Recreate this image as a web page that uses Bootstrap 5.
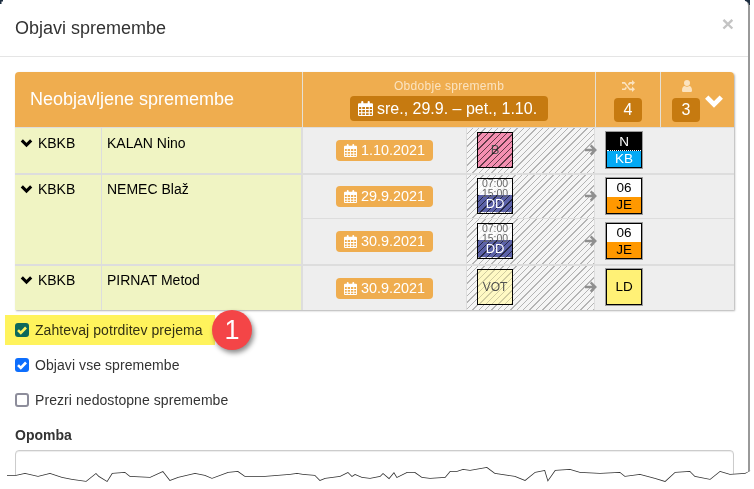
<!DOCTYPE html>
<html lang="sl">
<head>
<meta charset="UTF-8">
<title>Objavi spremembe</title>
<link rel="stylesheet" href="https://cdn.jsdelivr.net/npm/bootstrap@5.3.0/dist/css/bootstrap.min.css">
<style>
    html, body { height: 489px; overflow: hidden; background: #fff; }
    body { font-family: "Liberation Sans", Arial, sans-serif; font-size: 14px; color: #333; }
    .shot { width: 750px; height: 489px; position: relative; }
    .dlg { height: 489px; border-right: 2px solid #999; border-radius: 0 6px 0 0; }
    .dlg-head { height: 57px; padding: 0 15px; border-bottom: 1px solid #e5e5e5; }
    .dlg-title { font-size: 18px; line-height: 1; margin: 0; color: #333; }
    .dlg-x { font-size: 21px; font-weight: 700; line-height: 1; color: #c4c4c4; margin-top: -9px; margin-right: -1px; }
    .dlg-body { padding: 15px 15px 0; }

    .chg { width: 719px; table-layout: fixed; border-collapse: separate; border-spacing: 0; box-shadow: 1px 1px 2px rgba(0,0,0,.3); border-radius: 4px 4px 0 0; margin-bottom: 5px; }
    .chg th { height: 55px; background: #efad4f; color: #fff; font-weight: 400; text-align: center; vertical-align: top; border-left: 1px solid #e5e0d5; padding: 8px 0 0; position: relative; }
    .chg th:first-child { border-left: 0; border-radius: 4px 0 0 0; text-align: left; vertical-align: middle; font-size: 18px; padding: 0 0 0 15px; }
    .chg th:nth-child(2) { padding-top: 7px; }
    .chg th:last-child { border-radius: 0 4px 0 0; }
    .chg td { height: 46px; padding: 0; background: #eee; border-top: 1px solid #ddd; position: relative; vertical-align: middle; }
    .chg tr.grp td { border-top-width: 2px; }
    .chg tr.sub-a td { height: 45px; }
    .chg tbody tr:first-child td { border-top-width: 1px; }
    .chg td.who { background: #f0f4c3; color: #000; vertical-align: top; padding: 5px 5px 0; border-top: 2px solid #ddd; line-height: 21px; }
    .chg tr.grp td.who { padding-top: 4px; }
    .chg td.who + td.who { border-left: 1px solid #ddd; }
    .chg tbody tr:first-child td.who { border-top-width: 1px; }
    .chg tr.sub-a td.who { height: 91px; }
    .chg td.who-right { border-right: 1px solid #ddd; }
    .chg td.day { text-align: center; border-left: 1px solid #ddd; }
    .chg td.old { border-left: 1px solid #ddd; border-right: 1px solid #ddd; }

    .per-cap { font-size: 12px; line-height: 14px; color: #fbe3c0; letter-spacing: .3px; }
    .per { display: inline-flex; align-items: center; gap: 4px; height: 25px; padding: 0 11px 0 8px; margin-top: 3px; background: #c67a10; color: #fff; font-size: 16px; border-radius: 4px; }
    .cnt { display: block; width: 28px; height: 24px; margin: 6px auto 0; line-height: 24px; background: #c67a10; color: #fff; font-size: 16px; border-radius: 4px; }
    .cnt-left { margin-left: 11px; }
    .hd-ico { display: block; margin: 0 auto; fill: #fbe3c0; }
    .hd-ico-left { margin-left: 21px; }
    .hd-chev { position: absolute; right: 10px; top: 23px; }
    .chev { margin: 0 1px 2px 0; }

    .dt { display: inline-flex; align-items: center; gap: 4px; height: 21px; width: 97px; justify-content: center; vertical-align: middle; background: #efad4f; color: #fff; font-size: 14.4px; border-radius: 4px; }

    .hatch { position: absolute; inset: 0; background: #f5f5f5 repeating-linear-gradient(-45deg, #b4b4b4 0, #b4b4b4 1px, transparent 1px, transparent 4.5px); }
    .tile { position: absolute; left: 10px; top: 4px; width: 36px; height: 36px; border: 1px solid #000; overflow: hidden; text-align: center; color: #555; font-size: 13px; line-height: 34px; }
    .tile::after { content: ""; position: absolute; inset: 0; background: repeating-linear-gradient(-45deg, rgba(0,0,0,.6) 0, rgba(0,0,0,.6) 1px, transparent 1px, transparent 4.5px); }
    .grp .tile, .grp .nw { top: 3px; }
    .tile-pink { background: #f48fb1; }
    .tile-cream { background: #fff9c4; font-size: 12px; }
    .tile-cream::after { opacity: .3; }
    .tile-top { position: relative; z-index: 1; height: 17px; background: rgba(255,255,255,.88); font-size: 10.5px; line-height: 10px; color: #666; }
    .tile-top span { display: block; }
    .tile-top span:first-child { margin-top: -1px; }
    .tile-btm { height: 17px; background: #5c62a8; color: #fff; font-size: 13px; line-height: 17px; }
    .tile-btm span { position: relative; z-index: 1; }
    .go { position: absolute; right: -3px; top: 16px; fill: #8f8f8f; z-index: 1; }
    .grp .go { top: 15px; }

    .nw { position: absolute; left: 11px; top: 4px; width: 36px; height: 36px; border: 1px solid #000; box-shadow: 0 0 0 1px rgba(0,0,0,.35); overflow: hidden; text-align: center; color: #000; font-size: 13.5px; }
    .nw-top { height: 18px; line-height: 17px; background: #fff; border-bottom: 1px dotted #fff; }
    .nw-btm { height: 16px; line-height: 16px; }
    .nw-n { background: #000; color: #fff; }
    .nw-kb { background: #03a9f4; color: #fff; }
    .nw-je { background: #ff9800; }
    .nw-ld { background: #fff176; line-height: 34px; }

    .opt { display: flex; align-items: center; gap: 6px; height: 30px; padding-left: 10px; margin-bottom: 5px; margin-left: -10px; font-size: 14px; letter-spacing: .07px; line-height: 1; width: 210px; position: relative; white-space: nowrap; }
    .opt .form-check-input { margin: 0; width: 14px; height: 14px; flex: none; border: 2px solid #8d8d9b; border-radius: 3px; }
    .opt .form-check-input:checked { border: 0; background-size: 14px 14px; background-image: url("data:image/svg+xml,%3csvg xmlns='http://www.w3.org/2000/svg' viewBox='0 0 14 14'%3e%3cpath fill='none' stroke='%23fff' stroke-width='2.600' d='M3 7.200l2.800 2.800L11 4.500'/%3e%3c/svg%3e"); }
    .opt-mark::after { content: ""; position: absolute; inset: 0; background: #fff35c; mix-blend-mode: multiply; }
    .num { position: absolute; left: 212px; top: 310px; width: 40px; height: 40px; border-radius: 50%; background: #f44547; color: #fff; font-size: 27px; line-height: 40px; text-align: center; box-shadow: 2px 3px 5px rgba(0,0,0,.45); }
    .note-lbl { font-weight: 700; margin: 10px 0 5px; line-height: 20px; }
    .note { height: 60px; width: 719px; border: 1px solid #ccc; border-radius: 4px; box-shadow: inset 0 1px 1px rgba(0,0,0,.075); }
    .tear { position: absolute; left: 0; top: 0; }
</style>
</head>
<body>
<svg width="0" height="0" class="position-absolute">
    <symbol id="i-cal" viewBox="0 0 14 14"><path fill-rule="evenodd" d="M1 2h2V1a1 1 0 0 1 2 0v1h4V1a1 1 0 0 1 2 0v1h2a1 1 0 0 1 1 1v10a1 1 0 0 1-1 1H1a1 1 0 0 1-1-1V3a1 1 0 0 1 1-1zM1 5.500v2h2v-2zm3 0v2h2.500v-2zm3.500 0v2H10v-2zm3.500 0v2h2v-2zM1 8.500v2h2v-2zm3 0v2h2.500v-2zm3.500 0v2H10v-2zm3.500 0v2h2v-2zM1 11.500V13h2v-1.500zm3 0V13h2.500v-1.500zm3.500 0V13H10v-1.500zm3.500 0V13h2v-1.500z"/></symbol>
    <symbol id="i-chev" viewBox="0 0 14 10"><path d="M1.800 1.500L7 6.700l5.200-5.200" fill="none" stroke="currentColor" stroke-width="3.400"/></symbol>
    <symbol id="i-go" viewBox="0 0 12 12"><path d="M6.500 0.500L12 6l-5.500 5.500-1.700-1.700L7.200 7.300H0V4.700h7.200L4.800 2.200z"/></symbol>
    <symbol id="i-shuf" viewBox="0 0 13 12"><path d="M0 2h3l5 6.500h2V6.500L13 9.300 10 12v-1.800H7.500L2.500 3.700H0zM0 8.500h2.500l1.400-1.800 1 1.400-1.600 2H0zM7.500 2H10V0l3 2.800-3 2.800V3.700H8.300L6.900 5.500l-1-1.400z"/></symbol>
    <symbol id="i-user" viewBox="0 0 10 12"><circle cx="5" cy="3" r="3"/><path d="M0 10.500C0 7.500 1.200 6 2.700 6 3.500 6.500 4.200 6.800 5 6.800s1.500-.3 2.300-.8C8.800 6 10 7.500 10 10.500c0 1-.7 1.500-1.500 1.500h-7C.7 12 0 11.500 0 10.500z"/></symbol>
</svg>
<div class="shot">
    <div class="dlg bg-white">
        <div class="dlg-head d-flex align-items-center justify-content-between">
            <h4 class="dlg-title">Objavi spremembe</h4>
            <span class="dlg-x">×</span>
        </div>
        <div class="dlg-body">
            <table class="chg">
                <colgroup>
                    <col style="width:86px"><col style="width:201px"><col style="width:164px"><col style="width:129px"><col style="width:65px"><col style="width:74px">
                </colgroup>
                <thead>
                    <tr>
                        <th colspan="2">Neobjavljene spremembe</th>
                        <th colspan="2">
                            <div class="per-cap">Obdobje sprememb</div>
                            <span class="per"><svg width="15" height="15" fill="#fff"><use href="#i-cal"/></svg>sre., 29.9. – pet., 1.10.</span>
                        </th>
                        <th>
                            <svg class="hd-ico" width="13" height="12"><use href="#i-shuf"/></svg>
                            <span class="cnt">4</span>
                        </th>
                        <th>
                            <svg class="hd-ico hd-ico-left" width="10" height="12"><use href="#i-user"/></svg>
                            <span class="cnt cnt-left">3</span>
                            <svg class="hd-chev" width="20" height="14" color="#fff"><use href="#i-chev"/></svg>
                        </th>
                    </tr>
                </thead>
                <tbody>
                    <tr>
                        <td class="who"><svg class="chev" width="13" height="9" color="#000"><use href="#i-chev"/></svg> KBKB</td>
                        <td class="who who-right">KALAN Nino</td>
                        <td class="day"><span class="dt"><svg width="13" height="13" fill="#fff"><use href="#i-cal"/></svg>1.10.2021</span></td>
                        <td class="old">
                            <div class="hatch"></div>
                            <div class="tile tile-pink">B</div>
                            <svg class="go" width="12" height="12"><use href="#i-go"/></svg>
                        </td>
                        <td colspan="2">
                            <div class="nw"><div class="nw-top nw-n">N</div><div class="nw-btm nw-kb">KB</div></div>
                        </td>
                    </tr>
                    <tr class="grp sub-a">
                        <td class="who" rowspan="2"><svg class="chev" width="13" height="9" color="#000"><use href="#i-chev"/></svg> KBKB</td>
                        <td class="who who-right" rowspan="2">NEMEC Blaž</td>
                        <td class="day"><span class="dt"><svg width="13" height="13" fill="#fff"><use href="#i-cal"/></svg>29.9.2021</span></td>
                        <td class="old">
                            <div class="hatch"></div>
                            <div class="tile"><div class="tile-top"><span>07:00</span><span>15:00</span></div><div class="tile-btm"><span>DD</span></div></div>
                            <svg class="go" width="12" height="12"><use href="#i-go"/></svg>
                        </td>
                        <td colspan="2">
                            <div class="nw"><div class="nw-top">06</div><div class="nw-btm nw-je">JE</div></div>
                        </td>
                    </tr>
                    <tr>
                        <td class="day"><span class="dt"><svg width="13" height="13" fill="#fff"><use href="#i-cal"/></svg>30.9.2021</span></td>
                        <td class="old">
                            <div class="hatch"></div>
                            <div class="tile"><div class="tile-top"><span>07:00</span><span>15:00</span></div><div class="tile-btm"><span>DD</span></div></div>
                            <svg class="go" width="12" height="12"><use href="#i-go"/></svg>
                        </td>
                        <td colspan="2">
                            <div class="nw"><div class="nw-top">06</div><div class="nw-btm nw-je">JE</div></div>
                        </td>
                    </tr>
                    <tr class="grp">
                        <td class="who"><svg class="chev" width="13" height="9" color="#000"><use href="#i-chev"/></svg> KBKB</td>
                        <td class="who who-right">PIRNAT Metod</td>
                        <td class="day"><span class="dt"><svg width="13" height="13" fill="#fff"><use href="#i-cal"/></svg>30.9.2021</span></td>
                        <td class="old">
                            <div class="hatch"></div>
                            <div class="tile tile-cream">VOT</div>
                            <svg class="go" width="12" height="12"><use href="#i-go"/></svg>
                        </td>
                        <td colspan="2">
                            <div class="nw nw-ld">LD</div>
                        </td>
                    </tr>
                </tbody>
            </table>
            <label class="opt opt-mark"><input class="form-check-input" type="checkbox" checked>Zahtevaj potrditev prejema</label>
            <label class="opt"><input class="form-check-input" type="checkbox" checked>Objavi vse spremembe</label>
            <label class="opt"><input class="form-check-input" type="checkbox">Prezri nedostopne spremembe</label>
            <div class="note-lbl">Opomba</div>
            <div class="note"></div>
        </div>
    </div>
    <div class="num">1</div>
    <svg class="tear" width="754" height="489">
        <defs>
            <filter id="soft" x="-5%" y="-100%" width="110%" height="300%"><feGaussianBlur stdDeviation=".7"/></filter>
            <clipPath id="under"><polygon points="0,489 0,475 7,475 16,475 25,473 38,476 50,473 62,477 72,479 86,481 96,473 99,476 107,481 112,473 125,472 130,476 150,477 163,471 170,480 178,477 195,473 205,475 212,478 228,472 238,471 245,476 265,476 290,474 297,473 303,474 315,475 320,480 325,478 340,476 348,472 352,476 355,474 362,477 370,478 380,476 383,473 389,478 394,472 397,477 407,472 415,472 422,477 430,478 445,477 450,471 457,471 463,469 470,470 487,467 495,473 515,476 525,480 535,472 545,470 548,480 555,470 570,469 580,472 600,473 620,472 625,476 640,474 655,478 665,481 675,472 690,471 695,476 710,479 720,471 730,474 745,473 752,470 754,470 754,489"/></clipPath>
        </defs>
        <polygon fill="#fff" points="0,489 0,475 7,475 16,475 25,473 38,476 50,473 62,477 72,479 86,481 96,473 99,476 107,481 112,473 125,472 130,476 150,477 163,471 170,480 178,477 195,473 205,475 212,478 228,472 238,471 245,476 265,476 290,474 297,473 303,474 315,475 320,480 325,478 340,476 348,472 352,476 355,474 362,477 370,478 380,476 383,473 389,478 394,472 397,477 407,472 415,472 422,477 430,478 445,477 450,471 457,471 463,469 470,470 487,467 495,473 515,476 525,480 535,472 545,470 548,480 555,470 570,469 580,472 600,473 620,472 625,476 640,474 655,478 665,481 675,472 690,471 695,476 710,479 720,471 730,474 745,473 752,470 754,470 754,489"/>
        <g clip-path="url(#under)">
            <polyline fill="none" stroke="#333" stroke-width="1.600" filter="url(#soft)" points="7,475 16,475 25,473 38,476 50,473 62,477 72,479 86,481 96,473 99,476 107,481 112,473 125,472 130,476 150,477 163,471 170,480 178,477 195,473 205,475 212,478 228,472 238,471 245,476 265,476 290,474 297,473 303,474 315,475 320,480 325,478 340,476 348,472 352,476 355,474 362,477 370,478 380,476 383,473 389,478 394,472 397,477 407,472 415,472 422,477 430,478 445,477 450,471 457,471 463,469 470,470 487,467 495,473 515,476 525,480 535,472 545,470 548,480 555,470 570,469 580,472 600,473 620,472 625,476 640,474 655,478 665,481 675,472 690,471 695,476 710,479 720,471 730,474 745,473 750,470"/>
        </g>
        <path fill="#1c2d40" d="M0 0h3v1.500H1.500V4H0z"/>
        <path fill="#1c2d40" d="M745 0h5v5h-1c0-2-1.500-3.500-4-4z"/>
    </svg>
</div>
</body>
</html>
